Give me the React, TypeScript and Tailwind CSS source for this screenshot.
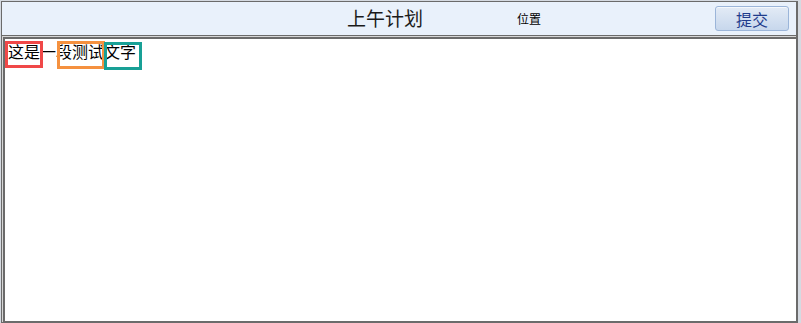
import React from 'react'

const cjk = "font-['Noto_Sans_CJK_SC','Noto_Sans',sans-serif]"

interface MarkProps {
  text: string
  boxClassName: string
}

// inline run of text with an annotation frame drawn over it
function Marked({ text, boxClassName }: MarkProps) {
  return (
    <span className="relative inline-block">
      {text}
      <span className={`pointer-events-none absolute border-[3px] ${boxClassName}`} />
    </span>
  )
}

function PlanHeader() {
  return (
    <div className="flex h-[34px] items-center border-b border-[#6b6b6b] bg-[#e9f1fb]">
      <span className="mb-[3px] ml-[345px] text-[19px] leading-none text-[#1a1a1a]">上午计划</span>
      <span className="ml-[94px] text-[12px] leading-none text-black">位置</span>
      <button
        type="button"
        className="ml-auto mr-[7px] flex h-[25px] w-[74px] items-center justify-center rounded-[3px] border border-[#9bb5d9] bg-gradient-to-b from-[#e3ebf6] to-[#c7d7ec] text-[16px] leading-none text-[#1f3c8c] shadow-[inset_0_1px_0_#f4f8fd]"
      >
        提交
      </button>
    </div>
  )
}

function PlanBody() {
  return (
    <div className="ml-[1px] flex-1 border-b border-l-2 border-t-2 border-[#6b6b6b] bg-white pl-[3px]">
      <p className="whitespace-nowrap text-[16px] leading-[24px] text-black">
        <Marked text="这是" boxClassName="-left-[3px] top-[2px] h-[27px] w-[38px] border-[#f04848]" />
        一
        <Marked text="段测试" boxClassName="left-[1px] top-[2px] h-[28px] w-[48px] border-[#f5913f]" />
        <Marked text="文字" boxClassName="left-0 top-[3px] h-[28px] w-[38px] border-[#18a096]" />
      </p>
    </div>
  )
}

export default function App() {
  return (
    <div className={`h-[323px] w-[801px] overflow-hidden bg-[#d5dae1] pt-[1px] ${cjk}`}>
      <div className="ml-[1px] flex h-[322px] w-[797px] flex-col border-l border-r-2 border-t border-b border-[#6b6b6b] bg-[#d6d6d6]">
        <PlanHeader />
        <div className="h-[1px]" />
        <PlanBody />
      </div>
    </div>
  )
}
